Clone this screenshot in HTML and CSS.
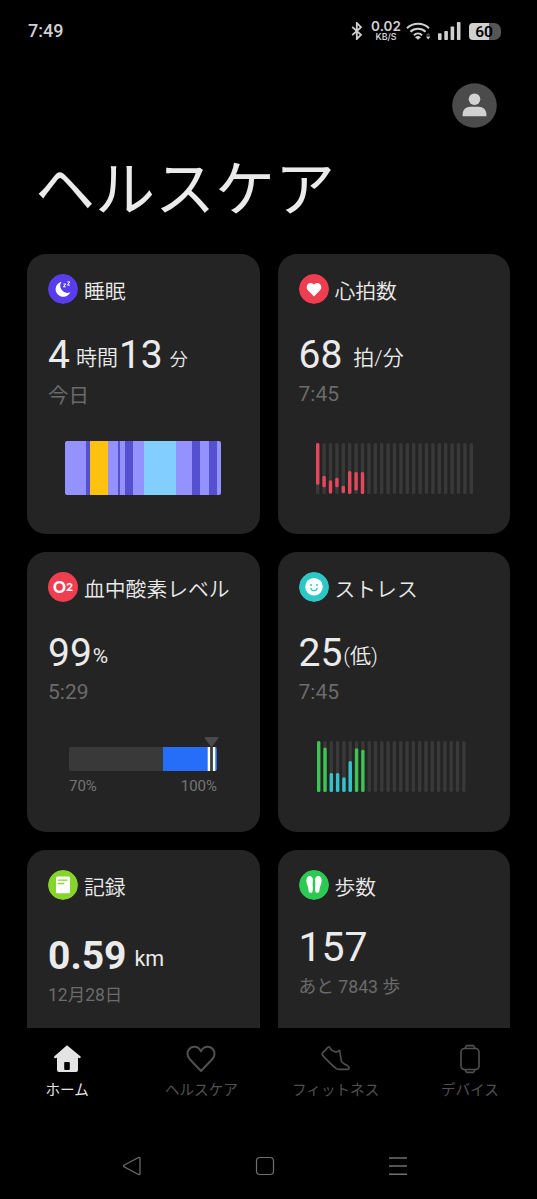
FILE: index.html
```html
<!DOCTYPE html>
<html lang="ja">
  <head>
    <meta charset="UTF-8" />
    <meta name="viewport" content="width=device-width, initial-scale=1.0" />
    <title>ヘルスケア</title>
    <link rel="stylesheet" href="styles.css">
  </head>
  <body>
    <header class="status-bar">
      <span class="clock">7:49</span>
      <div class="status-icons">
        <svg class="bluetooth" width="12" height="18" viewBox="0 0 12 18">
          <path d="M1.2 4.8 10 12.8 5.8 17V1L10 5.2 1.2 13.2" />
        </svg>
        <div class="speed">
          <span class="speed-value">0.02</span>
          <span class="speed-unit">KB/S</span>
        </div>
        <svg class="wifi" width="26" height="18" viewBox="0 0 26 18">
          <path d="M1 6.2a16 16 0 0 1 22 0M4.4 9.8a11 11 0 0 1 15.2 0M7.9 13.2a6 6 0 0 1 8.2 0" />
          <path class="solid" d="M12 17.8 9 15.2a4.6 4.6 0 0 1 6 0z" />
          <path class="solid" d="M20 14.6h4.4l-2.2 2.8z" />
          <path class="dim" d="M20 13.4h4.4l-2.2-2.6z" />
        </svg>
        <svg class="signal" width="23" height="18" viewBox="0 0 23 18">
          <rect x="0" y="11.2" width="3.6" height="6.8" rx="0.8" />
          <rect x="6.3" y="9" width="3.6" height="9" rx="0.8" />
          <rect x="12.6" y="4.5" width="3.6" height="13.5" rx="0.8" />
          <rect x="18.9" y="0" width="3.6" height="18" rx="0.8" />
        </svg>
        <div class="battery"><span>60</span></div>
      </div>
    </header>
    <!-- .status-bar -->

    <div class="account">
      <svg width="45" height="45" viewBox="0 0 45 45">
        <circle cx="22.5" cy="22.5" r="22.3" fill="#4b4b4b" />
        <circle cx="22.5" cy="16.2" r="5.8" fill="#d2d2d2" />
        <path d="M10.6 33.2v-1.6c0-5 3.4-7.8 7.6-7.8h8.6c4.2 0 7.6 2.8 7.6 7.8v1.6z" fill="#d2d2d2" />
      </svg>
    </div>

    <h1>ヘルスケア</h1>

    <main class="cards">
      <section class="card">
        <h2>
          <svg class="badge" viewBox="0 0 30 30">
            <circle cx="15" cy="15" r="15" fill="#593ded" />
            <path d="M13.6 7.8a7.6 7.6 0 1 0 8.6 10.4 7 7 0 0 1-8.6-10.4z" fill="#fff" />
            <path d="M15.4 10h2.3l-2.3 2.8h2.3M19.4 7.9h2.4l-2.4 3.2h2.4" fill="none" stroke="#fff" stroke-width="1" />
          </svg>
          睡眠
        </h2>
        <p class="value">4<span class="unit unit-hours">時間</span>13<span class="unit unit-minutes">分</span></p>
        <p class="note note-ja">今日</p>
        <div class="sleep-chart" data-sleep></div>
      </section>

      <section class="card">
        <h2>
          <svg class="badge" viewBox="0 0 30 30">
            <circle cx="15" cy="15" r="15" fill="#ee3e50" />
            <path d="M15 22.4 8.9 16.2a4.2 4.2 0 0 1-1.2-3c0-2.4 1.8-4.2 4-4.2 1.4 0 2.6.7 3.3 1.8.7-1.1 1.9-1.8 3.3-1.8 2.2 0 4 1.8 4 4.2 0 1.1-.4 2.2-1.2 3z" fill="#fff" />
          </svg>
          心拍数
        </h2>
        <p class="value">68<span class="unit unit-bpm">拍/分</span></p>
        <p class="note">7:45</p>
        <svg class="bars heart-chart" width="158" height="51" data-heart></svg>
      </section>

      <section class="card">
        <h2>
          <span class="badge badge-oxygen">O<small>2</small></span>
          血中酸素レベル
        </h2>
        <p class="value">99<span class="unit unit-percent">%</span></p>
        <p class="note">5:29</p>
        <div class="oxygen">
          <div class="oxygen-track">
            <div class="oxygen-range"></div>
            <svg class="oxygen-marker" width="15" height="34" viewBox="0 0 15 34">
              <path d="M1 0h13q1 .3.5 1L8.5 9.2q-1 1.1-2 0L.5 1Q0 .3 1 0z" fill="#4a4a4a" />
              <rect x="3.7" y="10" width="7.6" height="24" fill="#fff" />
              <rect x="6.1" y="10" width="2.8" height="24" fill="#3c3c3c" />
            </svg>
          </div>
          <div class="oxygen-scale"><span>70%</span><span>100%</span></div>
        </div>
      </section>

      <section class="card">
        <h2>
          <svg class="badge" viewBox="0 0 30 30">
            <circle cx="15" cy="15" r="15" fill="#2bc8c5" />
            <circle cx="15" cy="14.7" r="8.8" fill="#fff" />
            <g fill="#2bc8c5">
              <circle cx="12" cy="13" r="1" />
              <circle cx="18" cy="13" r="1" />
            </g>
            <path d="M11.9 16.3a3.2 3.2 0 0 0 6.2 0" fill="none" stroke="#2bc8c5" stroke-width="1.3" stroke-linecap="round" />
          </svg>
          ストレス
        </h2>
        <p class="value">25<span class="unit unit-level">(低)</span></p>
        <p class="note">7:45</p>
        <svg class="bars stress-chart" width="158" height="51" data-stress></svg>
      </section>

      <section class="card">
        <h2>
          <svg class="badge" viewBox="0 0 30 30">
            <circle cx="15" cy="15" r="15" fill="#86d42c" />
            <rect x="8" y="6.5" width="14" height="16.7" rx="1.5" fill="#fff" />
            <path d="M10.4 10.2h8.6M10.4 13.5h5.3" stroke="#86d42c" stroke-width="1.3" stroke-linecap="round" />
          </svg>
          記録
        </h2>
        <p class="value value-distance">0.59<span class="unit unit-km">km</span></p>
        <p class="note note-small">12月28日</p>
      </section>

      <section class="card">
        <h2>
          <svg class="badge" viewBox="0 0 30 30">
            <circle cx="15" cy="15" r="15" fill="#2cca52" />
            <path id="foot" d="M10.7 6c2.3 0 3.5 2.5 3.2 5.2-.2 1.8-.4 2.8-.1 5 .3 3.200.3 6.600-2 6.600-2.200 0-2.300-2.300-2.600-4.800-.3-2.300-2-4.300-1.800-7.500C7.500 7.700 8.800 6 10.700 6z" fill="#fff" />
            <use href="#foot" transform="matrix(-1 0 0 1 30 0)" />
          </svg>
          歩数
        </h2>
        <p class="value value-steps">157</p>
        <p class="note note-small note-steps">あと 7843 歩</p>
      </section>
    </main>
    <!-- .cards -->

    <nav class="tabs">
      <a class="tab active">
        <svg width="30" height="30" viewBox="0 0 30 30">
          <path d="M15 1.2 28.3 12.2q.9.8.2 1.6-.7.7-1.700.3l-.8-.5V26q0 2-2 2H7q-2 0-2-2V13.600l-1.100.6q-1 .3-1.700-.4-.7-.8.2-1.600z" fill="currentColor" />
          <rect x="12.2" y="18" width="5.6" height="8" rx="1" fill="#000" />
        </svg>
        ホーム
      </a>
      <a class="tab">
        <svg width="30" height="30" viewBox="0 0 30 30">
          <path d="M15 27 3.800 15.200a7.300 7.300 0 0 1-2.300-5.200c0-4.200 3-7.300 6.700-7.300 3 0 5.500 1.700 6.800 4.700 1.300-3 3.800-4.700 6.800-4.700 3.700 0 6.700 3.100 6.700 7.300a7.300 7.300 0 0 1-2.300 5.200z" />
        </svg>
        ヘルスケア
      </a>
      <a class="tab">
        <svg width="30" height="30" viewBox="0 0 30 30">
          <path class="thin" d="M6.900 3.400 1.600 9q-.9 1.200 0 2.400C6 16.200 10.500 21 15 24.400q1.400 1 3.200 1h8.200q1.700-.1 1.700-1.500 0-1.500-1.700-2.300-3.600-1.500-5.800-3.900-1-4.400-1.900-11.200l-.6-.3-1.100 1.100q-1.200.9-2.900.4-3.900-.9-5.400-4.200-.8-1.200-1.800-.1z" />
        </svg>
        フィットネス
      </a>
      <a class="tab">
        <svg width="30" height="30" viewBox="0 0 30 30">
          <rect class="thin" x="6" y="4.5" width="18" height="21" rx="3.5" />
          <path class="thin" d="M10 4.200 11.600 1.600h6.800L20 4.200M10 25.800l1.600 2.600h6.800l1.600-2.600" />
        </svg>
        デバイス
      </a>
    </nav>
    <!-- .tabs -->

    <footer class="system-nav">
      <svg width="20" height="20" viewBox="0 0 20 20">
        <path d="M2 9.200 16.500 1.500q1.500-.5 1.500 1v15q0 1.500-1.500 1L2 10.800q-1-.8 0-1.600z" />
      </svg>
      <svg width="20" height="20" viewBox="0 0 20 20">
        <rect x="1.500" y="1.500" width="17" height="17" rx="3.500" />
      </svg>
      <svg width="20" height="20" viewBox="0 0 20 20">
        <path d="M1 2h18M1 10h18M1 18.300h18" stroke-width="1.500" />
      </svg>
    </footer>

    <script>
      // [sleep stage, width]
      const sleep = [
        ['light', 63], ['deep', 13], ['awake', 54], ['light', 28],
        ['deep', 7], ['light', 15], ['deep', 25], ['light', 32],
        ['rem', 95], ['light', 48], ['deep', 25], ['light', 28],
        ['deep', 23], ['light', 12]
      ];
      // [top, bottom] of each bar in percent
      const heart = [
        [0, 82], [64, 87], [73, 99], [68, 87],
        [84, 98], [55, 100], [57, 93], [57, 100]
      ];
      const stress = [100, 87.5, 37.5, 37.5, 29, 61, 86, 83];

      const sleepChart = document.querySelector('[data-sleep]');
      sleep.forEach(([stage, width]) => {
        const part = document.createElement('i');
        part.className = stage;
        part.style.flexGrow = width;
        sleepChart.append(part);
      });

      function addBar(chart, x, top, bottom, name) {
        const bar = document.createElementNS('http://www.w3.org/2000/svg', 'rect');
        bar.setAttribute('x', x);
        bar.setAttribute('y', `${top}%`);
        bar.setAttribute('width', 3.4);
        bar.setAttribute('height', `${bottom - top}%`);
        bar.setAttribute('rx', 1.5);
        bar.setAttribute('class', name);
        chart.append(bar);
      }

      function drawBars(chart, count, step, ranges) {
        for (let i = 0; i < count; i++) {
          addBar(chart, i * step, 0, 100, 'track');
          if (ranges[i]) addBar(chart, i * step, ...ranges[i]);
        }
      }

      drawBars(
        document.querySelector('[data-heart]'),
        25,
        6.4,
        heart.map(([top, bottom]) => [top, bottom, 'pulse'])
      );
      drawBars(
        document.querySelector('[data-stress]'),
        24,
        6.31,
        stress.map(n => [100 - n, 100, n > 75 ? 'normal' : 'relaxed'])
      );
    </script>
  </body>
</html>
```
FILE: styles.css
```css
*,
*::before,
*::after {
  box-sizing: border-box;
  padding: 0;
  margin: 0;
}

body {
  height: 1199px;
  display: flex;
  flex-direction: column;
  overflow: hidden;
  background-color: #000;
  color: #ebebeb;
  font-family: Roboto, 'Noto Sans CJK JP', sans-serif;
}

svg {
  display: block;
  flex-shrink: 0;
}

.status-bar {
  height: 62px;
  padding: 0 36px 0 28px;
  display: flex;
  justify-content: space-between;
  align-items: center;
  color: #d0d0d0;
}

.clock {
  font-size: 18px;
  font-weight: 500;
  line-height: 20px;
  padding-bottom: 1px;
}

.status-icons {
  display: flex;
  align-items: center;
}

.bluetooth {
  margin-right: 8px;
  fill: none;
  stroke: #d0d0d0;
  stroke-width: 1.8;
}

.speed {
  width: 30px;
  display: flex;
  flex-direction: column;
  align-items: center;
  font-family: Inter, sans-serif;
  font-weight: 600;
}

.speed-value {
  font-size: 13.5px;
  line-height: 11px;
}

.speed-unit {
  font-size: 8.8px;
  line-height: 9px;
}

.wifi {
  margin-left: 5px;
  fill: none;
  stroke: #d0d0d0;
  stroke-width: 2;
}

.wifi .solid {
  fill: #d0d0d0;
  stroke: none;
}

.wifi .dim {
  fill: #555;
  stroke: none;
}

.signal {
  margin-left: 6px;
  fill: #d0d0d0;
}

.battery {
  width: 32px;
  height: 17px;
  margin-left: 8px;
  padding-right: 2px;
  border-radius: 4px 7px 7px 4px;
  background: linear-gradient(to right, #d0d0d0 62%, #565656 62%);
  color: #000;
  font-size: 15.5px;
  font-weight: 600;
  line-height: 18px;
  text-align: center;
}

.account {
  padding: 21px 40px 0 0;
  display: flex;
  justify-content: flex-end;
}

h1 {
  height: 126px;
  padding-left: 35px;
  font-size: 60px;
  font-weight: 400;
  line-height: 126px;
}

.cards {
  height: 774px;
  padding: 0 27px;
  display: grid;
  grid-template-columns: 1fr 1fr;
  grid-auto-rows: 280px;
  gap: 18px;
  overflow: hidden;
}

.card {
  padding: 20px 21px;
  border-radius: 19px;
  background-color: #242424;
}

.card h2 {
  height: 32px;
  display: flex;
  align-items: flex-start;
  gap: 6px;
  font-size: 20.8px;
  font-weight: 350;
  line-height: 37px;
  white-space: nowrap;
}

.badge {
  width: 30px;
  height: 30px;
  flex-shrink: 0;
  border-radius: 50%;
}

.badge-oxygen {
  display: flex;
  justify-content: center;
  align-items: center;
  background-color: #ee3e50;
  color: #fff;
  font-family: Lato, sans-serif;
  font-size: 16px;
  font-weight: 900;
  line-height: 30px;
}

.badge-oxygen small {
  font-size: 12px;
}

.value {
  height: 46px;
  margin-top: 26px;
  font-size: 39px;
  line-height: 46px;
  white-space: nowrap;
}

.unit {
  font-size: 21px;
  font-weight: 350;
  line-height: 1;
  vertical-align: 3px;
}

.unit-hours {
  margin: 0 1px 0 6px;
}

.unit-minutes {
  margin-left: 7px;
  font-size: 18px;
  vertical-align: 2px;
}

.unit-bpm {
  margin-left: 11px;
}

.unit-percent {
  margin-left: 1px;
  font-weight: 400;
}

.unit-level {
  margin-left: 1px;
}

.note {
  height: 26px;
  margin-top: 3px;
  color: #6b6b6b;
  font-size: 21px;
  line-height: 26px;
}

.note-ja {
  font-size: 20.5px;
  line-height: 30px;
}

.value-distance {
  margin-top: 31px;
  font-weight: 700;
}

.unit-km {
  margin-left: 8px;
  font-size: 21.5px;
  font-weight: 400;
}

.value-steps {
  margin-top: 22px;
  font-size: 41px;
}

.note-small {
  font-size: 17.5px;
}

.note-steps {
  margin-top: 4px;
  font-size: 17.7px;
}

.sleep-chart {
  width: 156px;
  height: 54px;
  margin: 34px 0 0 17px;
  display: flex;
  border-radius: 2px;
  overflow: hidden;
}

.light {
  background-color: #9492ff;
}

.deep {
  background-color: #5450d0;
}

.awake {
  background-color: #ffc20f;
}

.rem {
  background-color: #82cfff;
}

.bars {
  margin-top: 36px;
}

.track {
  fill: #393939;
}

.heart-chart {
  margin-left: 17px;
}

.stress-chart {
  margin-left: 18px;
}

.pulse {
  fill: #e5485d;
}

.normal {
  fill: #3cc552;
}

.relaxed {
  fill: #33c3cc;
}

.oxygen {
  width: 148px;
  margin: 42px 0 0 21px;
}

.oxygen-track {
  height: 24px;
  position: relative;
  display: flex;
  justify-content: flex-end;
  border-radius: 2px;
  background-color: #393939;
}

.oxygen-range {
  width: 54px;
  border-radius: 0 2px 2px 0;
  background-color: #266df8;
}

.oxygen-marker {
  position: absolute;
  right: -2px;
  bottom: 0;
}

.oxygen-scale {
  margin-top: 6px;
  display: flex;
  justify-content: space-between;
  color: #757575;
  font-size: 15px;
  line-height: 18px;
}

.tabs {
  height: 84px;
  padding-top: 16px;
  display: grid;
  grid-template-columns: repeat(4, 1fr);
}

.tab {
  display: flex;
  flex-direction: column;
  align-items: center;
  color: #505050;
  font-size: 14.6px;
  line-height: 33px;
}

.tab svg {
  fill: none;
  stroke: #505050;
  stroke-width: 2;
  stroke-linejoin: round;
}

.tab .thin {
  stroke-width: 1.6;
}

.tab.active {
  color: #e4e4e4;
}

.tab.active svg {
  stroke: none;
}

.system-nav {
  padding: 44px 73px 0 66px;
  display: grid;
  grid-template-columns: repeat(3, 1fr);
  justify-items: center;
}

.system-nav svg {
  fill: none;
  stroke: #707070;
  stroke-width: 1.2;
}
```
